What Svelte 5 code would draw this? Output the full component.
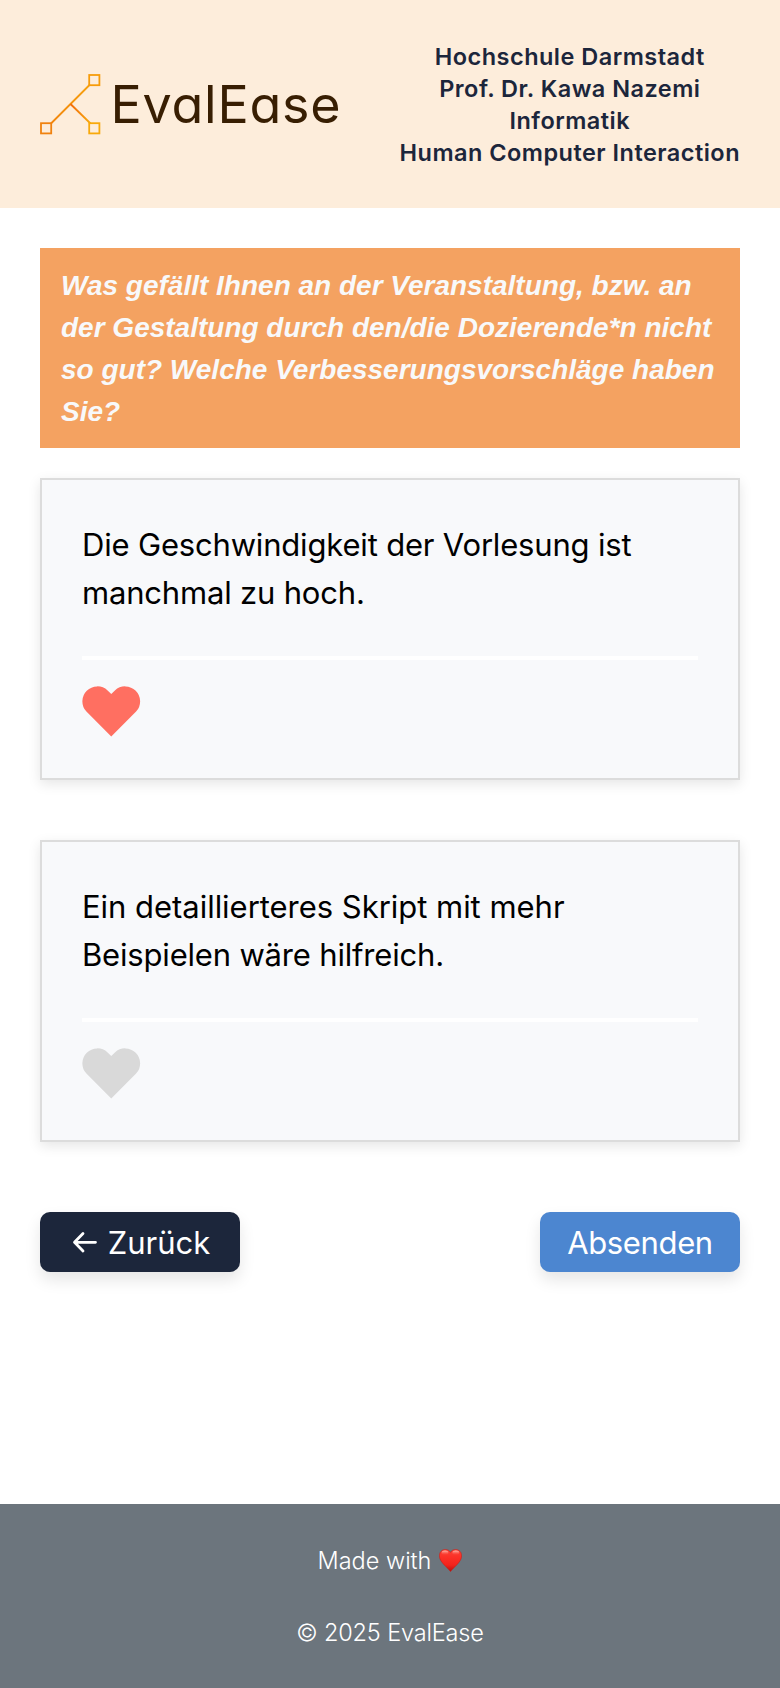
<script>
  let answers = $state([
    { text: ['Die Geschwindigkeit der Vorlesung ist', 'manchmal zu hoch.'], liked: true },
    { text: ['Ein detaillierteres Skript mit mehr', 'Beispielen wäre hilfreich.'], liked: false }
  ]);
  const course = ['Hochschule Darmstadt', 'Prof. Dr. Kawa Nazemi', 'Informatik', 'Human Computer Interaction'];
</script>

<div class="page">
  <header>
    <div class="logo">
      <svg width="62" height="62" viewBox="0 0 62 62" fill="none" stroke-width="1.8">
        <defs>
          <linearGradient id="branch" x1="0" y1="60" x2="60" y2="0" gradientUnits="userSpaceOnUse">
            <stop offset="0" stop-color="#f07d0c" />
            <stop offset="1" stop-color="#f8a80c" />
          </linearGradient>
          <linearGradient id="twig" x1="30" y1="30" x2="52" y2="52" gradientUnits="userSpaceOnUse">
            <stop offset="0" stop-color="#f26a0c" />
            <stop offset="1" stop-color="#f8b00c" />
          </linearGradient>
        </defs>
        <path d="M11 49.5L50 10.5" stroke="url(#branch)" />
        <path d="M30.5 30L50.5 49.5" stroke="url(#twig)" />
        <rect x="49.2" y="1" width="10.2" height="10.2" stroke="#f79c0a" />
        <rect x="49.2" y="49.2" width="10.2" height="10.2" stroke="#f8a90a" />
        <rect x="1" y="49.2" width="10.2" height="10.2" stroke="#f0820f" />
      </svg>
      <span class="wordmark">EvalEase</span>
    </div>
    <div class="course">
      {#each course as line}<div>{line}</div>{/each}
    </div>
  </header>

  <main>
    <h1>Was gefällt Ihnen an der Veranstaltung, bzw. an der Gestaltung durch den/die Dozierende*n nicht so gut? Welche Verbesserungsvorschläge haben Sie?</h1>

    {#each answers as answer}
      <article>
        <p>{answer.text[0]}<br />{answer.text[1]}</p>
        <hr />
        <button class="like" class:liked={answer.liked} aria-label="Gefällt mir" onclick={() => (answer.liked = !answer.liked)}>
          <svg width="59" height="51" viewBox="0 0 59 51">
            <path fill="currentColor" d="M29.25 8L25.6 4.4A15 15 0 0 0 4.4 25.6L29.25 50.45L54.1 25.6A15 15 0 0 0 32.9 4.4Z" />
          </svg>
        </button>
      </article>
    {/each}

    <nav>
      <button class="btn back">
        <svg width="26" height="24" viewBox="0 0 26 24" fill="none" stroke="currentColor" stroke-width="2.8" stroke-linecap="round" stroke-linejoin="round">
          <path d="M11 3.5L2.5 12.3L11 21M3 12.3H23.5" />
        </svg>
        <span>Zurück</span>
      </button>
      <button class="btn send"><span>Absenden</span></button>
    </nav>
  </main>

  <footer>
    <div class="made">
      <span>Made with</span>
      <svg width="23" height="23" viewBox="0 0 23 23">
        <defs>
          <linearGradient id="red" x1="0" y1="0" x2="0" y2="1">
            <stop offset="0" stop-color="#fb4438" />
            <stop offset="0.35" stop-color="#fb3026" />
            <stop offset="0.7" stop-color="#f4241c" />
            <stop offset="1" stop-color="#b80f0c" />
          </linearGradient>
          <linearGradient id="shine" x1="0" y1="0" x2="0" y2="1">
            <stop offset="0" stop-color="#ffc4b8" />
            <stop offset="1" stop-color="#ff5a4a" stop-opacity="0" />
          </linearGradient>
        </defs>
        <path fill="url(#red)" stroke="#c41a14" stroke-width="0.5" d="M11.5 3.4C12.6 1.3 14.4.5 16.6.5C20.2.5 22.6 3.2 22.6 6.9C22.6 13 15.4 17.4 11.5 22.6C7.6 17.4.4 13 .4 6.9C.4 3.2 2.8.5 6.4.5C8.6.5 10.4 1.3 11.5 3.4Z" />
        <ellipse cx="6" cy="3.7" rx="3.4" ry="2.3" fill="url(#shine)" />
        <ellipse cx="16.8" cy="3.7" rx="3.4" ry="2.3" fill="url(#shine)" />
      </svg>
    </div>
    <div class="copy">© 2025 EvalEase</div>
  </footer>
</div>

<style>
  :global(body) { margin: 0; background: #fff; }
  .page {
    display: flex;
    flex-direction: column;
    min-height: 1688px;
    font-family: Inter, sans-serif;
    color: #000;
  }
  header {
    box-sizing: border-box;
    height: 208px;
    padding: 41px 40px 39px;
    display: flex;
    justify-content: space-between;
    align-items: center;
    background: #fdeddb;
  }
  .logo { display: flex; align-items: center; gap: 8.5px; }
  .wordmark {
    font-size: 52px;
    line-height: 60px;
    letter-spacing: 0.75px;
    font-feature-settings: 'cv11';
    color: #381e02;
  }
  .course {
    font-size: 23.5px;
    line-height: 32px;
    font-weight: 600;
    letter-spacing: 0.47px;
    text-align: center;
    white-space: nowrap;
    color: #1c263b;
  }
  main { flex: 1; padding: 40px 40px 0; }
  h1 {
    margin: 0 0 30px;
    padding: 17px 19px 15px 21px;
    font: italic bold 28px/42px 'Liberation Sans', sans-serif;
    color: #f8f9fa;
    background: #f4a261;
  }
  article {
    box-sizing: border-box;
    height: 302px;
    margin-bottom: 60px;
    padding: 41px 40px 39px;
    border: 2px solid #dcdcdc;
    background: #f8f9fb;
    box-shadow: 0 4px 12px rgba(0, 0, 0, 0.1);
  }
  p { margin: 0 0 39px; font-size: 31px; line-height: 48px; letter-spacing: -0.18px; white-space: nowrap; }
  article:nth-of-type(2) p::first-line { letter-spacing: -0.03px; }
  hr { height: 4px; margin: 0 0 26px; border: 0; background: #fff; }
  button { border: 0; padding: 0; font: inherit; cursor: pointer; }
  .like { display: block; background: none; color: #d9d9d9; }
  .like svg { display: block; }
  .liked { color: #ff6f61; }
  nav { display: flex; justify-content: space-between; margin-top: 70px; }
  .btn {
    display: flex;
    align-items: center;
    justify-content: center;
    width: 200px;
    height: 60px;
    border-radius: 10px;
    font-size: 31px;
    color: #fff;
    box-shadow: 0 8px 16px rgba(0, 0, 0, 0.1);
  }
  .back { gap: 10px; padding-left: 2px; background: #1c263b; }
  .send { background: #4c86d0; letter-spacing: -0.35px; }
  footer {
    box-sizing: border-box;
    height: 184px;
    padding: 41px 40px 39px;
    display: flex;
    flex-direction: column;
    align-items: center;
    gap: 40px;
    font-size: 23.5px;
    line-height: 32px;
    font-weight: 300;
    color: #fff;
    background: #6c757d;
  }
  .made { display: flex; align-items: center; gap: 8px; }
  .made svg { margin-top: -2px; }
  .copy { letter-spacing: -0.15px; }
</style>
